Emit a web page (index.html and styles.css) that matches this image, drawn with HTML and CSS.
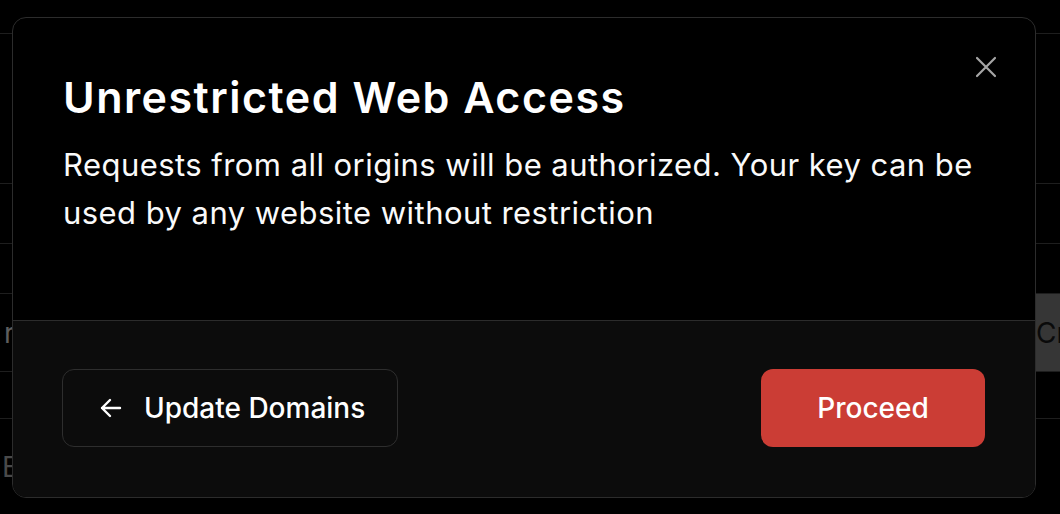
FILE: index.html
```html
<!DOCTYPE html>
<html lang="en">
<head>
<meta charset="utf-8">
<title>Unrestricted Web Access</title>
<link rel="stylesheet" href="styles.css">
</head>
<body>
<div class="page">
  <div class="row row-head"></div>
  <div class="row row-a"></div>
  <div class="row row-b"></div>
  <div class="row row-c"></div>
  <div class="row row-d">
    <span class="bg-text">rate limit</span>
    <span class="bg-btn">Create</span>
  </div>
  <div class="row row-e"></div>
  <div class="row row-f"><span class="bg-text muted">Expires</span></div>
</div>

<div class="overlay">
  <div class="modal" role="dialog" aria-labelledby="mtitle">
    <div class="modal-body">
      <button class="close" aria-label="Close">
        <svg width="22" height="22" viewBox="0 0 22 22" fill="none" stroke="currentColor" stroke-width="2.2" stroke-linecap="round"><path d="M2 2L20 20M20 2L2 20"/></svg>
      </button>
      <h2 id="mtitle" class="title">Unrestricted Web Access</h2>
      <p class="desc">Requests from all origins will be authorized. Your key can be used by any website without restriction</p>
    </div>
    <div class="modal-footer">
      <button class="btn btn-outline">
        <svg width="22" height="20" viewBox="0 0 22 20" fill="none" stroke="currentColor" stroke-width="2.4" stroke-linecap="round" stroke-linejoin="round"><path d="M20 10H2M10 2L2 10L10 18"/></svg>
        <span>Update Domains</span>
      </button>
      <button class="btn btn-danger">Proceed</button>
    </div>
  </div>
</div>
</body>
</html>
```

FILE: styles.css
```css
* { box-sizing: border-box; }
html, body {
  margin: 0;
  padding: 0;
  background: #000;
  width: 1060px;
  height: 514px;
  overflow: hidden;
  font-family: Inter, "Noto Sans", sans-serif;
  color: #fff;
}

.page {
  display: flex;
  flex-direction: column;
}
.row {
  display: flex;
  align-items: center;
  justify-content: space-between;
  border-bottom: 1px solid #1e1e1e;
}
.row-head { height: 34px; }
.row-a { height: 150px; }
.row-b { height: 60px; }
.row-c { height: 50px; }
.row-d { height: 78px; }
.row-e { height: 47px; }
.row-f { height: 96px; border-bottom: none; }

.bg-text {
  font-size: 28px;
  color: #5e5e5e;
  padding-left: 4px;
  white-space: nowrap;
}
.bg-text.muted { color: #4a4a4a; padding-left: 2px; }
.bg-btn {
  align-self: stretch;
  flex-shrink: 0;
  display: flex;
  align-items: center;
  width: 220px;
  margin-right: -100px;
  padding-left: 96px;
  background: #363636;
  color: #0a0a0a;
  font-size: 28px;
  white-space: nowrap;
}

.overlay {
  position: absolute;
  inset: 0;
  padding: 17px 0 0 12px;
}
.modal {
  width: 1024px;
  height: 481px;
  background: #000;
  border: 1.5px solid #2c2c2c;
  border-radius: 14px;
  overflow: hidden;
  display: flex;
  flex-direction: column;
}
.modal-body {
  position: relative;
  flex: 1;
  padding: 55px 50px 0 50px;
}
.close {
  position: absolute;
  top: 38px;
  right: 38px;
  width: 22px;
  height: 22px;
  padding: 0;
  border: none;
  background: none;
  color: #a6a6a6;
  display: flex;
}
.title {
  margin: 0;
  font-size: 43px;
  line-height: 48px;
  font-weight: 600;
  letter-spacing: 1.5px;
}
.desc {
  margin: 20px 0 0;
  font-size: 31px;
  line-height: 48px;
  font-weight: 400;
  letter-spacing: 0.45px;
  color: #fafafa;
}

.modal-footer {
  background: #0c0c0c;
  border-top: 1.5px solid #2c2c2c;
  padding: 48px 50px 50px 49px;
  display: flex;
  justify-content: space-between;
  align-items: center;
}
.btn {
  height: 78px;
  border-radius: 12px;
  font-family: inherit;
  font-size: 28px;
  font-weight: 500;
  color: #fff;
  display: flex;
  align-items: center;
  justify-content: center;
}
.btn-outline {
  width: 336px;
  background: transparent;
  border: 1.5px solid #2e2e2e;
  gap: 22px;
  justify-content: flex-start;
  padding-left: 37px;
}
.btn-danger {
  width: 224px;
  background: #cb3d35;
  border: none;
}
```
